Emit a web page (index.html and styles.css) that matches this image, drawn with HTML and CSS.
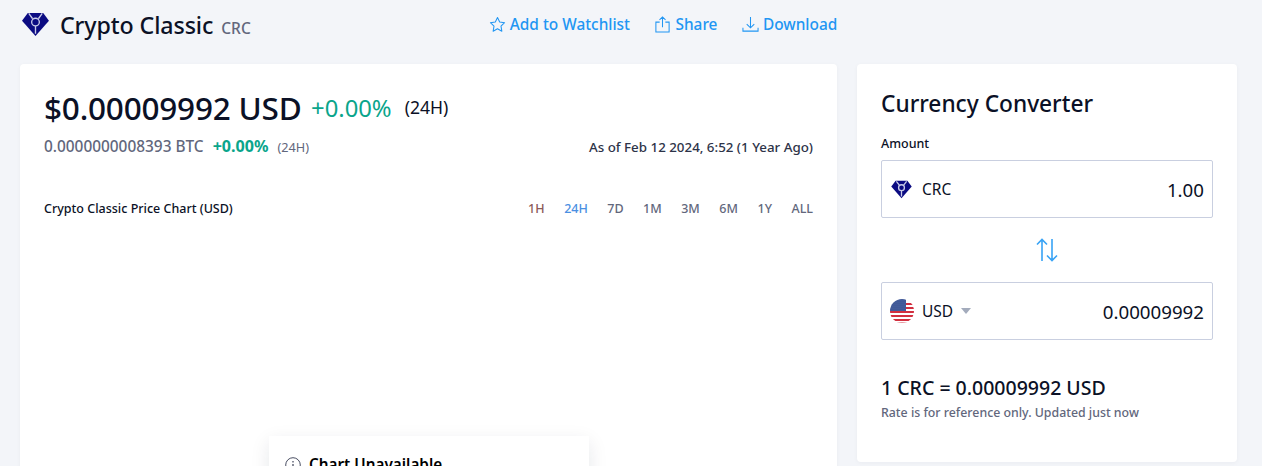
FILE: index.html
```html
<!DOCTYPE html>
<html lang="en">
<head>
<meta charset="utf-8">
<title>Crypto Classic (CRC)</title>
<link rel="stylesheet" href="styles.css">
</head>
<body>
<header class="topbar">
  <div class="brand">
    <svg class="logo" viewBox="0 0 28 26"><path fill="#0b0b82" d="M6 1h16l6 8-14 16L0 9z"/><g fill="none" stroke="#c9cbe8" stroke-width="1.4"><circle cx="14" cy="10.5" r="4"/><path d="M7 1.500l4 5.500M21 1.500l-4 5.500M14 14.500v8"/></g></svg>
    <h1 class="name">Crypto Classic</h1>
    <span class="ticker">CRC</span>
  </div>
  <nav class="actions">
    <a class="action"><svg class="icon" viewBox="0 0 18 18"><path fill="none" stroke="currentColor" stroke-width="1.1" stroke-linejoin="round" d="M9 1.500l2.300 4.900 5.200.7-3.800 3.700.9 5.300L9 13.500l-4.600 2.600.9-5.300L1.500 7.100l5.200-.7z"/></svg>Add to Watchlist</a>
    <a class="action"><svg class="icon" viewBox="0 0 18 18"><path fill="none" stroke="currentColor" stroke-width="1.1" d="M6 6.500H2v10.500h14V6.500h-4M9 12V1.200M5.800 4.200L9 1l3.200 3.200"/></svg>Share</a>
    <a class="action"><svg class="icon" viewBox="0 0 18 18"><path fill="none" stroke="currentColor" stroke-width="1.1" d="M9 1v11M5 8.500l4 4 4-4M1 12.500v3.500h16v-3.500"/></svg>Download</a>
  </nav>
</header>
<main class="columns">
  <section class="card chart-card">
    <div class="price-row">
      <span class="price">$0.00009992 USD</span>
      <span class="change">+0.00%</span>
      <span class="period">(24H)</span>
    </div>
    <div class="sub-row">
      <div class="btc">
        <span>0.0000000008393 BTC</span>
        <b class="btc-change">+0.00%</b>
        <small class="btc-period">(24H)</small>
      </div>
      <span class="asof">As of Feb 12 2024, 6:52 (1 Year Ago)</span>
    </div>
    <div class="chart-head">
      <h2 class="chart-title">Crypto Classic Price Chart (USD)</h2>
      <div class="ranges">
        <span class="range first">1H</span>
        <span class="range active">24H</span>
        <span class="range">7D</span>
        <span class="range">1M</span>
        <span class="range">3M</span>
        <span class="range">6M</span>
        <span class="range">1Y</span>
        <span class="range">ALL</span>
      </div>
    </div>
    <div class="notice">
      <svg class="info" viewBox="0 0 16 16"><circle cx="8" cy="8" r="7.300" fill="none" stroke="#4a4f63" stroke-width="1"/><path stroke="#4a4f63" stroke-width="1.300" d="M8 7v5M8 4v1.500"/></svg>
      <span>Chart Unavailable</span>
    </div>
  </section>
  <aside class="card converter">
    <h2 class="conv-title">Currency Converter</h2>
    <label class="amount-label">Amount</label>
    <div class="field">
      <svg class="coin" viewBox="0 0 28 26"><path fill="#0b0b82" d="M6 1h16l6 8-14 16L0 9z"/><g fill="none" stroke="#c9cbe8" stroke-width="1.800"><circle cx="14" cy="10.500" r="4"/><path d="M7 2l4 5M21 2l-4 5M14 14.500v8"/></g></svg>
      <span class="code">CRC</span>
      <span class="value">1.00</span>
    </div>
    <div class="swap">
      <svg class="swap-icon" viewBox="0 0 22 24"><path fill="none" stroke="#38a3f5" stroke-width="1.600" d="M6 23V1.500M1 6.500l5-5 5 5M16 1v21.500M11 17.500l5 5 5-5"/></svg>
    </div>
    <div class="field">
      <svg class="flag" viewBox="0 0 24 24">
        <defs>
          <clipPath id="round"><circle cx="12" cy="12" r="12"/></clipPath>
          <pattern id="stars" width="2" height="2" patternUnits="userSpaceOnUse"><rect width="2" height="2" fill="#2f4a8f"/><circle cx="1" cy="1" r=".45" fill="#c5cde6"/></pattern>
        </defs>
        <g clip-path="url(#round)">
          <rect width="24" height="24" fill="#fff"/>
          <path fill="#d22f3f" d="M0 12h24v2H0zM0 16h24v2H0zM0 20h24v2H0zM16 4h8v2H16zM16 8h8v2H16zM0 23.500h24V24H0z"/>
          <rect width="16" height="12" fill="url(#stars)"/>
        </g>
      </svg>
      <span class="code">USD</span>
      <span class="caret"></span>
      <span class="value">0.00009992</span>
    </div>
    <p class="rate">1 CRC = 0.00009992 USD</p>
    <p class="rate-note">Rate is for reference only. Updated just now</p>
  </aside>
</main>
</body>
</html>
```
FILE: styles.css
```css
* { box-sizing: border-box; }
html, body { margin: 0; height: 466px; overflow: hidden; }
body {
  background: #f3f5f9;
  font-family: "Noto Sans", "Open Sans", sans-serif;
  color: #0b1126;
}
.topbar { display: flex; height: 64px; padding: 11px 0 0 22px; position: relative; }
.brand { display: flex; align-items: center; height: 28px; }
.logo { width: 27px; height: 25px; margin-right: 11px; margin-top: -2px; }
.name { margin: 0; font-size: 23.200px; font-weight: 500; line-height: 30px; letter-spacing: -0.1px; }
.ticker { margin: 5px 0 0 8px; font-size: 15.500px; color: #62677c; font-weight: 500; }
.actions { display: flex; gap: 24.500px; margin-left: 238px; height: 26px; align-items: center; }
.action { display: flex; align-items: center; gap: 4px; color: #2196f3; font-size: 15.400px; font-weight: 500; }
.icon { width: 17px; height: 17px; }
.columns { display: flex; gap: 20px; padding: 0 25px 0 20px; align-items: flex-start; }
.card { background: #fff; border-radius: 4px; box-shadow: 0 1px 4px rgba(20,30,60,.04); }
.chart-card { position: relative; width: 817px; height: 500px; padding: 24px 24px 0; }
.price-row { display: flex; align-items: center; height: 40px; }
.price { font-size: 31.500px; font-weight: 500; line-height: 40px; letter-spacing: -0.2px; }
.change { margin-left: 9.500px; font-size: 23.800px; color: #0aa58b; line-height: 40px; }
.period { margin-left: 13px; font-size: 17.600px; line-height: 40px; margin-bottom: 2px; }
.sub-row { display: flex; justify-content: space-between; align-items: baseline; margin-top: 7px; }
.btc { font-size: 15.400px; color: #62677c; font-weight: 500; }
.btc-change { margin-left: 5px; color: #0aa58b; font-size: 16.100px; font-weight: 700; }
.btc-period { margin-left: 5px; font-size: 12.700px; font-weight: 400; }
.asof { font-size: 13.350px; color: #2d3348; font-weight: 500; }
.chart-head { display: flex; justify-content: space-between; align-items: center; margin-top: 41px; height: 20px; }
.chart-title { margin: 0; font-size: 12.500px; font-weight: 500; }
.ranges { display: flex; gap: 19.500px; font-size: 12.500px; font-weight: 500; color: #62677c; }
.first { color: #8c5a58; }
.active { color: #4a90e2; }
.notice {
  position: absolute; left: 249px; top: 372px; width: 320px; height: 130px;
  padding: 18px 16px; background: #fff; display: flex; align-items: flex-start; gap: 8px;
  font-size: 15.300px; font-weight: 600; color: #000; line-height: 20px;
  box-shadow: 0 6px 18px rgba(20,30,60,.1);
}
.info { width: 16px; height: 16px; margin-top: 3px; }
.converter { width: 380px; height: 398px; padding: 24px; }
.conv-title { margin: 0; font-size: 22.700px; font-weight: 500; line-height: 32px; }
.amount-label { display: block; margin-top: 16px; font-size: 12.500px; font-weight: 500; line-height: 16px; }
.field {
  display: flex; align-items: center; height: 58px; margin-top: 8px; padding: 0 8px;
  border: 1px solid #c9cfe0; border-radius: 2px;
}
.swap + .field { margin-top: 0; }
.coin { width: 21px; height: 19px; margin: 0 10px 0 1px; }
.flag { width: 24px; height: 24px; margin-right: 8px; }
.code { font-size: 15.500px; font-weight: 400; }
.caret { width: 0; height: 0; margin-left: 8px; margin-top: -1px; border: 5px solid transparent; border-top: 6px solid #a3abbc; border-bottom: 0; }
.value { margin-left: auto; font-size: 18.700px; }
.swap { display: flex; justify-content: center; align-items: center; height: 64px; }
.swap-icon { width: 22px; height: 26px; }
.rate { margin: 36px 0 0; font-size: 19.500px; font-weight: 500; line-height: 24px; }
.rate-note { margin: 5px 0 0; font-size: 12.350px; font-weight: 500; color: #62677c; line-height: 16px; }
```
